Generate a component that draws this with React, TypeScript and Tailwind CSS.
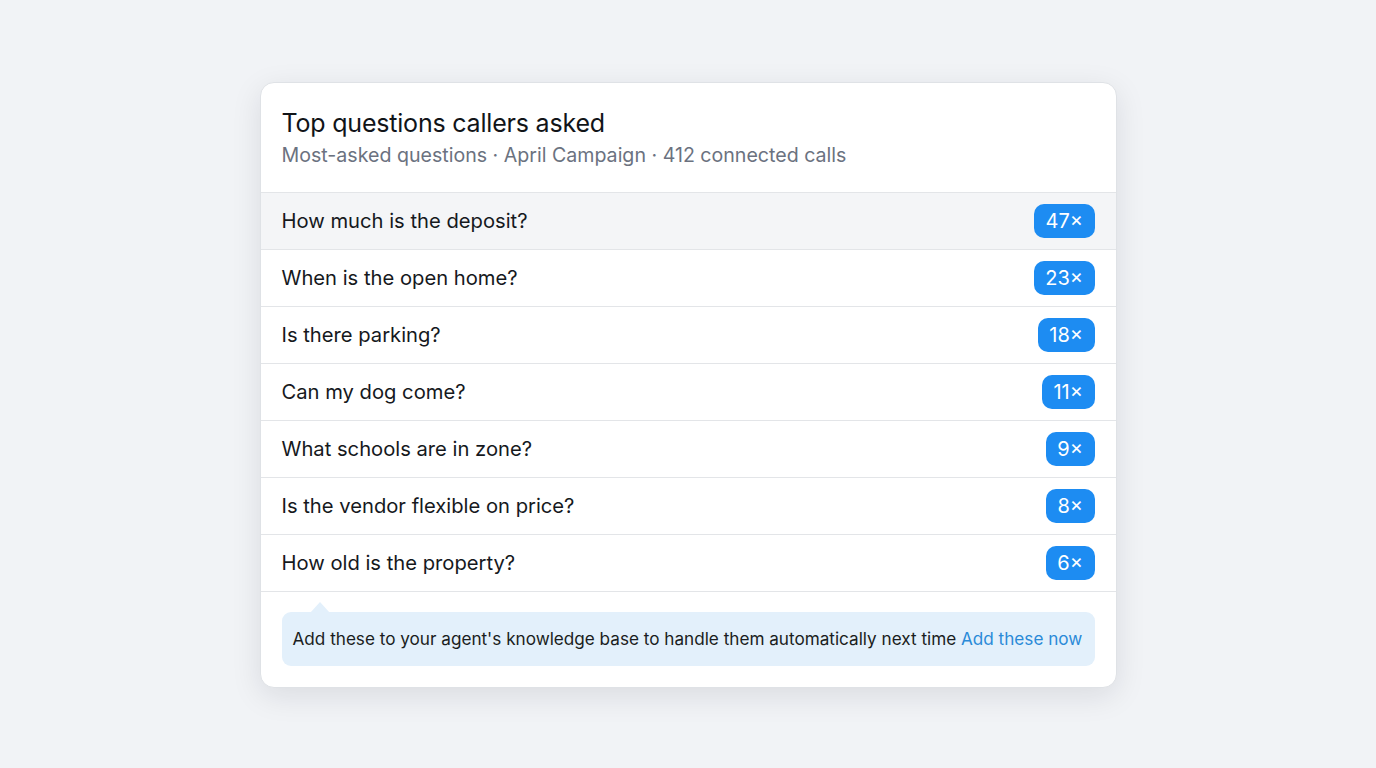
import React from "react";

const questions = [
  { text: "How much is the deposit?", count: 47 },
  { text: "When is the open home?", count: 23 },
  { text: "Is there parking?", count: 18 },
  { text: "Can my dog come?", count: 11 },
  { text: "What schools are in zone?", count: 9 },
  { text: "Is the vendor flexible on price?", count: 8 },
  { text: "How old is the property?", count: 6 },
];

export default function App() {
  return (
    <div className="min-h-screen w-full bg-[#f1f3f6] flex justify-center pt-[82px] font-['Inter',sans-serif]">
      <div className="w-[857px] h-[606px] bg-white rounded-[14px] border border-[#dfe2e6] shadow-[0_8px_30px_rgba(15,23,42,0.10)] flex flex-col">
        <div className="px-[21px] pt-[23px] h-[110px] border-b border-[#e3e5e8]">
          <h1 className="text-[25px] leading-[34px] text-[#111418] font-normal tracking-[-0.2px]">
            Top questions callers asked
          </h1>
          <p className="text-[19.6px] leading-[28px] text-[#6b7280] mt-[1px]">
            Most-asked questions · April Campaign · 412 connected calls
          </p>
        </div>
        <ul>
          {questions.map((q, i) => (
            <li
              key={q.text}
              className={`h-[57px] flex items-center justify-between pl-[21px] pr-[21px] border-b border-[#e3e5e8] ${
                i === 0 ? "bg-[#f4f5f7]" : ""
              }`}
            >
              <span className="text-[20.2px] text-[#16191d]">{q.text}</span>
              <span className="h-[34px] px-[11.5px] rounded-[10px] bg-[#1d8cf2] text-white text-[20px] flex items-center">
                {q.count}×
              </span>
            </li>
          ))}
        </ul>
        <div className="px-[21px] pt-[20px]">
          <div className="relative h-[54px] rounded-[9px] bg-[#e3f0fb] flex items-center px-[11px]">
            <div className="absolute -top-[10px] left-[28px] w-0 h-0 border-l-[10px] border-r-[10px] border-b-[11px] border-l-transparent border-r-transparent border-b-[#e3f0fb]" />
            <p className="text-[17.15px] text-[#1a1d21] whitespace-nowrap">
              Add these to your agent's knowledge base to handle them automatically next time{" "}
              <a href="#" className="text-[#2a8ad8]">Add these now</a>
            </p>
          </div>
        </div>
      </div>
    </div>
  );
}
